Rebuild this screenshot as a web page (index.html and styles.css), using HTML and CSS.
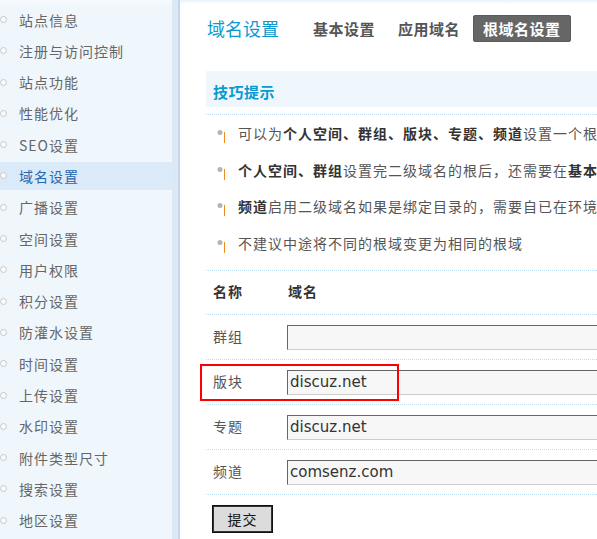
FILE: index.html
```html
<!DOCTYPE html>
<html lang="zh-CN">
<head>
<meta charset="utf-8">
<title>域名设置</title>
<link rel="stylesheet" href="styles.css">
</head>
<body>
<div class="page">
  <aside class="side">
    <ul class="menu">
      <li class="item"><span class="dot"></span>站点信息</li>
      <li class="item"><span class="dot"></span>注册与访问控制</li>
      <li class="item"><span class="dot"></span>站点功能</li>
      <li class="item"><span class="dot"></span>性能优化</li>
      <li class="item"><span class="dot"></span>SEO设置</li>
      <li class="item active"><span class="dot"></span>域名设置</li>
      <li class="item"><span class="dot"></span>广播设置</li>
      <li class="item"><span class="dot"></span>空间设置</li>
      <li class="item"><span class="dot"></span>用户权限</li>
      <li class="item"><span class="dot"></span>积分设置</li>
      <li class="item"><span class="dot"></span>防灌水设置</li>
      <li class="item"><span class="dot"></span>时间设置</li>
      <li class="item"><span class="dot"></span>上传设置</li>
      <li class="item"><span class="dot"></span>水印设置</li>
      <li class="item"><span class="dot"></span>附件类型尺寸</li>
      <li class="item"><span class="dot"></span>搜索设置</li>
      <li class="item"><span class="dot"></span>地区设置</li>
    </ul>
  </aside>
  <div class="rail"></div>
  <main class="main">
    <div class="header">
      <h1 class="title">域名设置</h1>
      <span class="tab">基本设置</span>
      <span class="tab">应用域名</span>
      <span class="tab current">根域名设置</span>
    </div>

    <div class="tips">
      <div class="tips-title">技巧提示</div>
    </div>
    <ul class="tip-list">
      <li class="tip"><svg class="tip-icon" width="10" height="22" viewBox="0 0 10 22"><circle cx="4" cy="10.5" r="2.5" fill="#b4b4b4"/><rect x="8" y="10" width="1" height="11" fill="#f08a1c"/></svg><span>可以为<b>个人空间、群组、版块、专题、频道</b>设置一个根域名，比如：门户设置了 discuz.net 那么门户的二级域名就可以设置为 xxx.discuz.net</span></li>
      <li class="tip"><svg class="tip-icon" width="10" height="22" viewBox="0 0 10 22"><circle cx="4" cy="10.5" r="2.5" fill="#b4b4b4"/><rect x="8" y="10" width="1" height="11" fill="#f08a1c"/></svg><span><b>个人空间、群组</b>设置完二级域名的根后，还需要在<b>基本设置</b>中开启二级域名功能</span></li>
      <li class="tip"><svg class="tip-icon" width="10" height="22" viewBox="0 0 10 22"><circle cx="4" cy="10.5" r="2.5" fill="#b4b4b4"/><rect x="8" y="10" width="1" height="11" fill="#f08a1c"/></svg><span><b>频道</b>启用二级域名如果是绑定目录的，需要自已在环境中绑定域名到相应目录</span></li>
      <li class="tip"><svg class="tip-icon" width="10" height="22" viewBox="0 0 10 22"><circle cx="4" cy="10.5" r="2.5" fill="#b4b4b4"/><rect x="8" y="10" width="1" height="11" fill="#f08a1c"/></svg><span>不建议中途将不同的根域变更为相同的根域</span></li>
    </ul>

    <div class="row head">
      <div class="lbl">名称</div>
      <div class="val">域名</div>
    </div>
    <div class="row field">
      <div class="lbl">群组</div>
      <input class="txt" type="text" value="">
    </div>
    <div class="row field">
      <div class="lbl">版块</div>
      <input class="txt" type="text" value="discuz.net">
    </div>
    <div class="row field">
      <div class="lbl">专题</div>
      <input class="txt" type="text" value="discuz.net">
    </div>
    <div class="row field">
      <div class="lbl">频道</div>
      <input class="txt" type="text" value="comsenz.com">
    </div>
    <div class="actions">
      <button class="btn" type="button">提交</button>
    </div>
  </main>
</div>
<div class="highlight"></div>
</body>
</html>
```

FILE: styles.css
```css
html, body {
  margin: 0;
  padding: 0;
  overflow: hidden;
  height: 100%;
}
body {
  font-family: "Noto Sans CJK SC", "DejaVu Sans", sans-serif;
  font-size: 14px;
  color: #555;
  background: #fff;
  position: relative;
}
.page {
  display: flex;
  height: 100%;
}
.side {
  width: 172px;
  flex: none;
  background: linear-gradient(#f7fbfe, #eff7fc 6px);
}
.menu {
  list-style: none;
  margin: 0;
  padding: 5.5px 0 0;
}
.item {
  display: flex;
  align-items: center;
  gap: 12px;
  height: 28px;
  margin-bottom: 3.3px;
  color: #666;
  letter-spacing: 1px;
  white-space: nowrap;
}
.item.active {
  background: #dbeaf8;
  color: #2767ad;
}
.dot {
  width: 7px;
  height: 7px;
  box-sizing: border-box;
  border: 1px solid #c8c8c8;
  border-radius: 50%;
  background: #fafafa;
  flex: none;
}
.rail {
  width: 6px;
  flex: none;
  background: #dbe9f7;
  border-right: 2px solid #c4d7ea;
}
.main {
  flex: 1;
  min-width: 0;
  overflow: hidden;
  padding-left: 26px;
  background: linear-gradient(#e8f2fa, #fff 4px);
}
.header {
  display: flex;
  align-items: center;
  height: 27px;
  margin-top: 15px;
  white-space: nowrap;
}
.title {
  margin: 0 21px 0 1px;
  font-size: 18px;
  font-weight: normal;
  color: #0b9ad0;
  line-height: 27px;
}
.tab {
  height: 27px;
  line-height: 27px;
  padding: 0 10px;
  margin-left: 3px;
  border-radius: 3px;
  font-size: 15px;
  letter-spacing: 0.5px;
  font-weight: bold;
  color: #555;
}
.tab.current {
  background: #666;
  color: #fff;
  box-shadow: inset 0 0 0 1px #5a5a5a;
}
.tips {
  margin-top: 29px;
  border-bottom: 1px dotted #bcdcf0;
}
.tips-title {
  height: 30px;
  line-height: 30px;
  padding-top: 6px;
  margin-bottom: 7px;
  padding-left: 7px;
  background: #eff7fc;
  color: #0b9ad0;
  font-weight: bold;
  font-size: 15px;
  letter-spacing: 0.5px;
}
.tip-list {
  list-style: none;
  margin: 0;
  padding: 0 0 9px;
  border-bottom: 1px dotted #bcdcf0;
}
.tip {
  display: flex;
  align-items: center;
  height: 36.5px;
  padding-left: 10px;
  white-space: nowrap;
  letter-spacing: 1px;
  color: #555;
}
.tip-icon {
  flex: none;
  margin-right: 12px;
}
.tip b {
  color: #333;
}
.row {
  display: flex;
  align-items: center;
  border-bottom: 1px dotted #bcdcf0;
  white-space: nowrap;
}
.row.head {
  height: 43px;
  font-weight: bold;
  color: #333;
}
.row.field {
  padding: 10px 0 9px;
}
.lbl {
  width: 81px;
  flex: none;
  box-sizing: border-box;
  padding: 0 0 4px 7px;
  letter-spacing: 1px;
  color: #555;
}
.row.head .lbl {
  color: #333;
}
.val {
  padding: 0 0 4px 1px;
  letter-spacing: 1px;
}
.txt {
  flex: none;
  width: 420px;
  height: 25px;
  box-sizing: border-box;
  margin: 0;
  padding: 0 2px 1px;
  background: #f7f7f7;
  border-style: solid;
  border-width: 1px;
  border-color: #666 #ccc #ccc #666;
  font-family: "DejaVu Sans", Verdana, sans-serif;
  font-size: 15px;
  color: #333;
  outline: none;
}
.actions {
  padding: 10px 0 0 6px;
}
.btn {
  width: 61px;
  height: 28px;
  margin: 0;
  padding: 0;
  background: #dcdcdc;
  border: 1px solid #111;
  box-shadow: inset 0 0 0 1px #333;
  font-family: "Noto Sans CJK SC", sans-serif;
  font-size: 14px;
  letter-spacing: 1px;
  color: #111;
}
.highlight {
  position: absolute;
  left: 200px;
  top: 364px;
  width: 199px;
  height: 37px;
  box-sizing: border-box;
  border: 2px solid #f00;
}
```
